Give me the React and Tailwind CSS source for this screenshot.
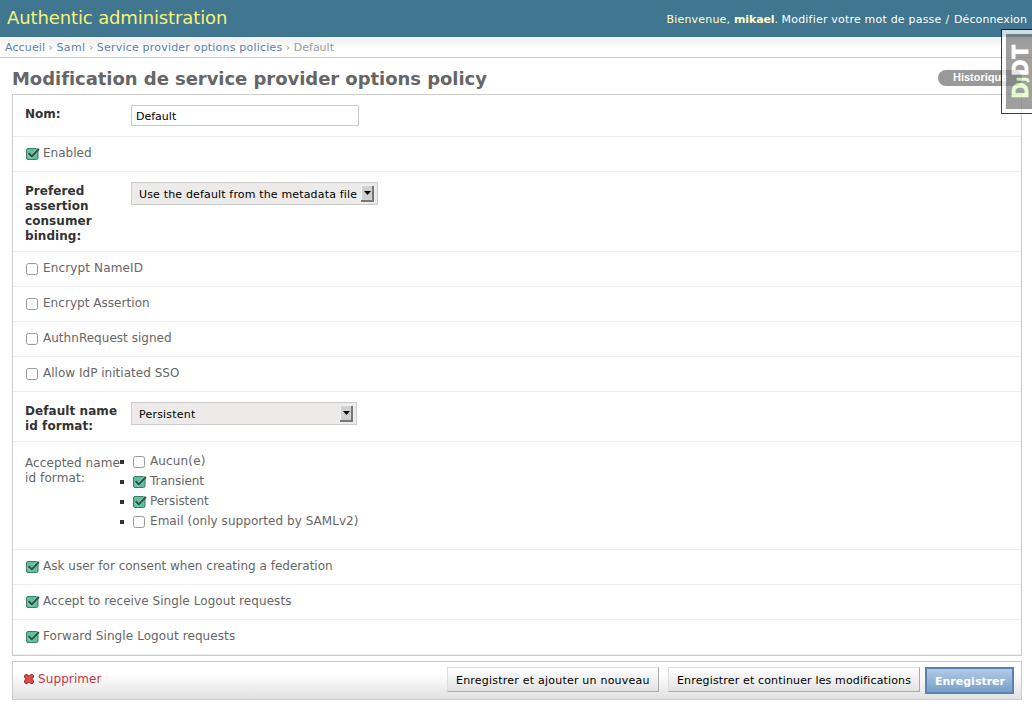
import React from "react";

function Check({ checked }) {
  return (
    <svg className="block shrink-0" width="15" height="14" viewBox="0 0 15 14" aria-hidden="true">
      {checked ? (
        <>
          <rect x="1.5" y="1.5" width="11.5" height="11" rx="1.5" fill="#5dc19b" stroke="#3f7d66" />
          <path d="M3 7 L6.3 10 L13.3 1.8" fill="none" stroke="#a5e3cb" strokeOpacity=".6" strokeWidth="3" />
          <path d="M3.6 6.2 L6.8 9.4 L13.8 2" fill="none" stroke="#304f45" strokeWidth="2" />
        </>
      ) : (
        <rect x="1.5" y="1.5" width="11" height="11" rx="2" fill="#fff" stroke="#999" />
      )}
    </svg>
  );
}

function CheckRow({ checked, children, className = "" }) {
  return (
    <div className="flex h-[35px] items-start border-b border-[#eee] pl-3 text-[12px] leading-[15px] text-[#666]">
      <span className="mt-[10px]"><Check checked={checked} /></span>
      <span className={"ml-[3px] mt-[9px] whitespace-nowrap " + className}>{children}</span>
    </div>
  );
}

function Select({ className = "", textClass = "", children }) {
  return (
    <div className={"flex h-[23px] items-center justify-between border border-[#ccc] bg-[#edebea] pl-[7px] pr-[3px] text-[11px] text-black " + className}>
      <span className={"whitespace-nowrap leading-[13px] pt-px " + textClass}>{children}</span>
      <svg width="13" height="17" viewBox="0 0 13 17" aria-hidden="true">
        <rect width="13" height="17" fill="#d0d0d0" />
        <path d="M0 .5H12M.5 0V16" stroke="#f4f3f2" />
        <path d="M0 16H13M12 1V17" stroke="#777" strokeWidth="2" />
        <path d="M3 6H10L6.5 10Z" fill="#000" />
      </svg>
    </div>
  );
}

function Option({ checked, children, className = "" }) {
  return (
    <li className="flex h-5 items-start">
      <span className="mt-[6px] size-1 shrink-0 bg-[#333]" />
      <span className="ml-[8px] mt-px"><Check checked={checked} /></span>
      <span className={"ml-[3px] whitespace-nowrap " + className}>{children}</span>
    </li>
  );
}

export default function App() {
  return (
    <div className="relative h-[708px] w-[1032px] overflow-hidden bg-white font-['DejaVu_Sans',sans-serif] text-[12px] text-[#333]">
      <header className="flex h-[37px] items-start justify-between bg-[#417690] pl-[7px] pr-[5px]">
        <h1 className="mt-[7px] whitespace-nowrap text-[18px] leading-[22px] tracking-[-0.12px] text-[#f4f379]">Authentic administration</h1>
        <div className="mt-[12px] whitespace-nowrap text-[11px] leading-[15px] text-white">
          <span className="tracking-[0.2px] text-[#ffc]">Bienvenue, </span>
          <b className="tracking-[-0.1px] text-[#ffc]">mikael</b>
          <span className="text-[#ffc]">. </span>
          <span className="tracking-[0.2px]">Modifier votre mot de passe</span>
          <span className="tracking-[0.6px] text-[#ffc]"> / </span>
          <span className="tracking-[0.11px]">Déconnexion</span>
        </div>
      </header>
      <nav className="h-[21px] whitespace-nowrap border-b border-[#ccc] bg-linear-to-b from-[#eee] to-white to-60% pl-[5px] pt-[3px] text-[11px] leading-[15px] text-[#999]">
        <span className="tracking-[0.12px] text-[#5b80b2]">Accueil</span> › <span className="tracking-[0.35px] text-[#5b80b2]">Saml</span> › <span className="tracking-[0.2px] text-[#5b80b2]">Service provider options policies</span> › Default
      </nav>
      <div className="flex h-[36px] items-start justify-between pl-3 pr-[10px]">
        <h2 className="mt-[9px] whitespace-nowrap text-[18px] font-bold leading-[23px] tracking-[-0.045px] text-[#666]">Modification de service provider options policy</h2>
        <span className="mt-3 h-4 w-[84px] rounded-full bg-[#999] pl-[15px] font-['Liberation_Sans',sans-serif] text-[11px] font-bold leading-[15px] text-white">Historique</span>
      </div>

      <main className="mx-3 w-[1010px] border border-[#ccc]">
        <div className="flex h-[42px] border-b border-[#eee] pl-3">
          <span className="mt-[12px] w-[106px] font-bold leading-[15px]">Nom:</span>
          <div className="mt-[10px] h-[21px] w-[228px] border border-[#ccc] bg-white pl-1 text-[11px] leading-[21px] text-black">Default</div>
        </div>
        <CheckRow checked>Enabled</CheckRow>
        <div className="flex h-[80px] border-b border-[#eee] pl-3">
          <span className="mt-[12px] w-[106px] font-bold leading-[15px] tracking-[0.06px]">Prefered<br />assertion<br />consumer<br />binding:</span>
          <Select className="mt-[10px] w-[247px]" textClass="tracking-[0.16px]">Use the default from the metadata file</Select>
        </div>
        <CheckRow className="tracking-[0.14px]">Encrypt NameID</CheckRow>
        <CheckRow className="tracking-[0.04px]">Encrypt Assertion</CheckRow>
        <CheckRow className="tracking-[0.03px]">AuthnRequest signed</CheckRow>
        <CheckRow className="tracking-[0.02px]">Allow IdP initiated SSO</CheckRow>
        <div className="flex h-[50px] border-b border-[#eee] pl-3">
          <span className="mt-[12px] w-[106px] whitespace-nowrap font-bold leading-[15px] tracking-[0.07px]">Default name<br />id format:</span>
          <Select className="mt-[10px] w-[226px]" textClass="tracking-[0.2px]">Persistent</Select>
        </div>
        <div className="flex h-[108px] border-b border-[#eee] pl-3 leading-[15px] text-[#666]">
          <span className="mt-[14px] w-[95px] whitespace-nowrap tracking-[0.1px]">Accepted name<br />id format:</span>
          <ul className="mt-[12px]">
            <Option className="tracking-[0.15px]">Aucun(e)</Option>
            <Option checked className="tracking-[-0.1px]">Transient</Option>
            <Option checked className="tracking-[-0.06px]">Persistent</Option>
            <Option className="tracking-[0.05px]">Email (only supported by SAMLv2)</Option>
          </ul>
        </div>
        <CheckRow checked className="tracking-[0.01px]">Ask user for consent when creating a federation</CheckRow>
        <CheckRow checked className="tracking-[0.07px]">Accept to receive Single Logout requests</CheckRow>
        <CheckRow checked className="tracking-[0.09px]">Forward Single Logout requests</CheckRow>
      </main>

      <footer className="mx-3 mt-[5px] flex h-[39px] w-[1010px] items-start justify-between border border-[#ccc] bg-linear-to-b from-white from-30% to-[#e1e1e1] pl-[11px] pr-[7px]">
        <div className="mt-[10px] flex items-start text-[12px] leading-[15px] text-[#c34]">
          <svg className="mt-[2px]" width="10" height="10" viewBox="0 0 10 10" aria-hidden="true">
            <path d="M1.6 .5H3L5 2.2L7 .5H8.4L9.5 1.6V3L7.8 5L9.5 7V8.4L8.4 9.5H7L5 7.8L3 9.5H1.6L.5 8.4V7L2.2 5L.5 3V1.6Z" fill="#e14b4b" stroke="#9b1c1c" />
          </svg>
          <span className="ml-[4px] tracking-[0.1px]">Supprimer</span>
        </div>
        <div className="mt-[5px] flex items-start whitespace-nowrap text-[11px] text-black">
          <span className="h-[25px] w-[212px] border border-[#ddd] border-b-[#aaa] border-r-[#aaa] bg-linear-to-b from-white to-[#e2e2e2] pl-2 leading-[25px] tracking-[0.22px]">Enregistrer et ajouter un nouveau</span>
          <span className="ml-[9px] h-[25px] w-[252px] border border-[#ddd] border-b-[#aaa] border-r-[#aaa] bg-linear-to-b from-white to-[#e2e2e2] pl-2 leading-[25px] tracking-[0.155px]">Enregistrer et continuer les modifications</span>
          <span className="ml-[5px] h-[27px] w-[89px] border-2 border-[#5b80b2] bg-linear-to-b from-[#b2cae5] to-[#78a0c8] pl-2 font-bold leading-[25px] text-white">Enregistrer</span>
        </div>
      </footer>

      <aside className="absolute left-[1001px] top-[29px] h-[85px] w-[31px] border border-r-0 border-black bg-white opacity-75">
        <div className="ml-1 mt-1 flex h-[75px] w-[26px] items-start bg-[#808080]">
          <span className="ml-[5px] mt-[10px] w-[20px] rotate-180 whitespace-nowrap font-['DejaVu_Sans_Condensed','Liberation_Sans',sans-serif] text-[22px] font-bold leading-[20px] tracking-[1px] text-white [-webkit-text-stroke:0.6px] [text-orientation:sideways] [writing-mode:vertical-rl]"><span className="text-[#dfffc0]">D<span className="align-[2px] text-[13px] leading-none">J</span></span>DT</span>
        </div>
      </aside>
    </div>
  );
}
